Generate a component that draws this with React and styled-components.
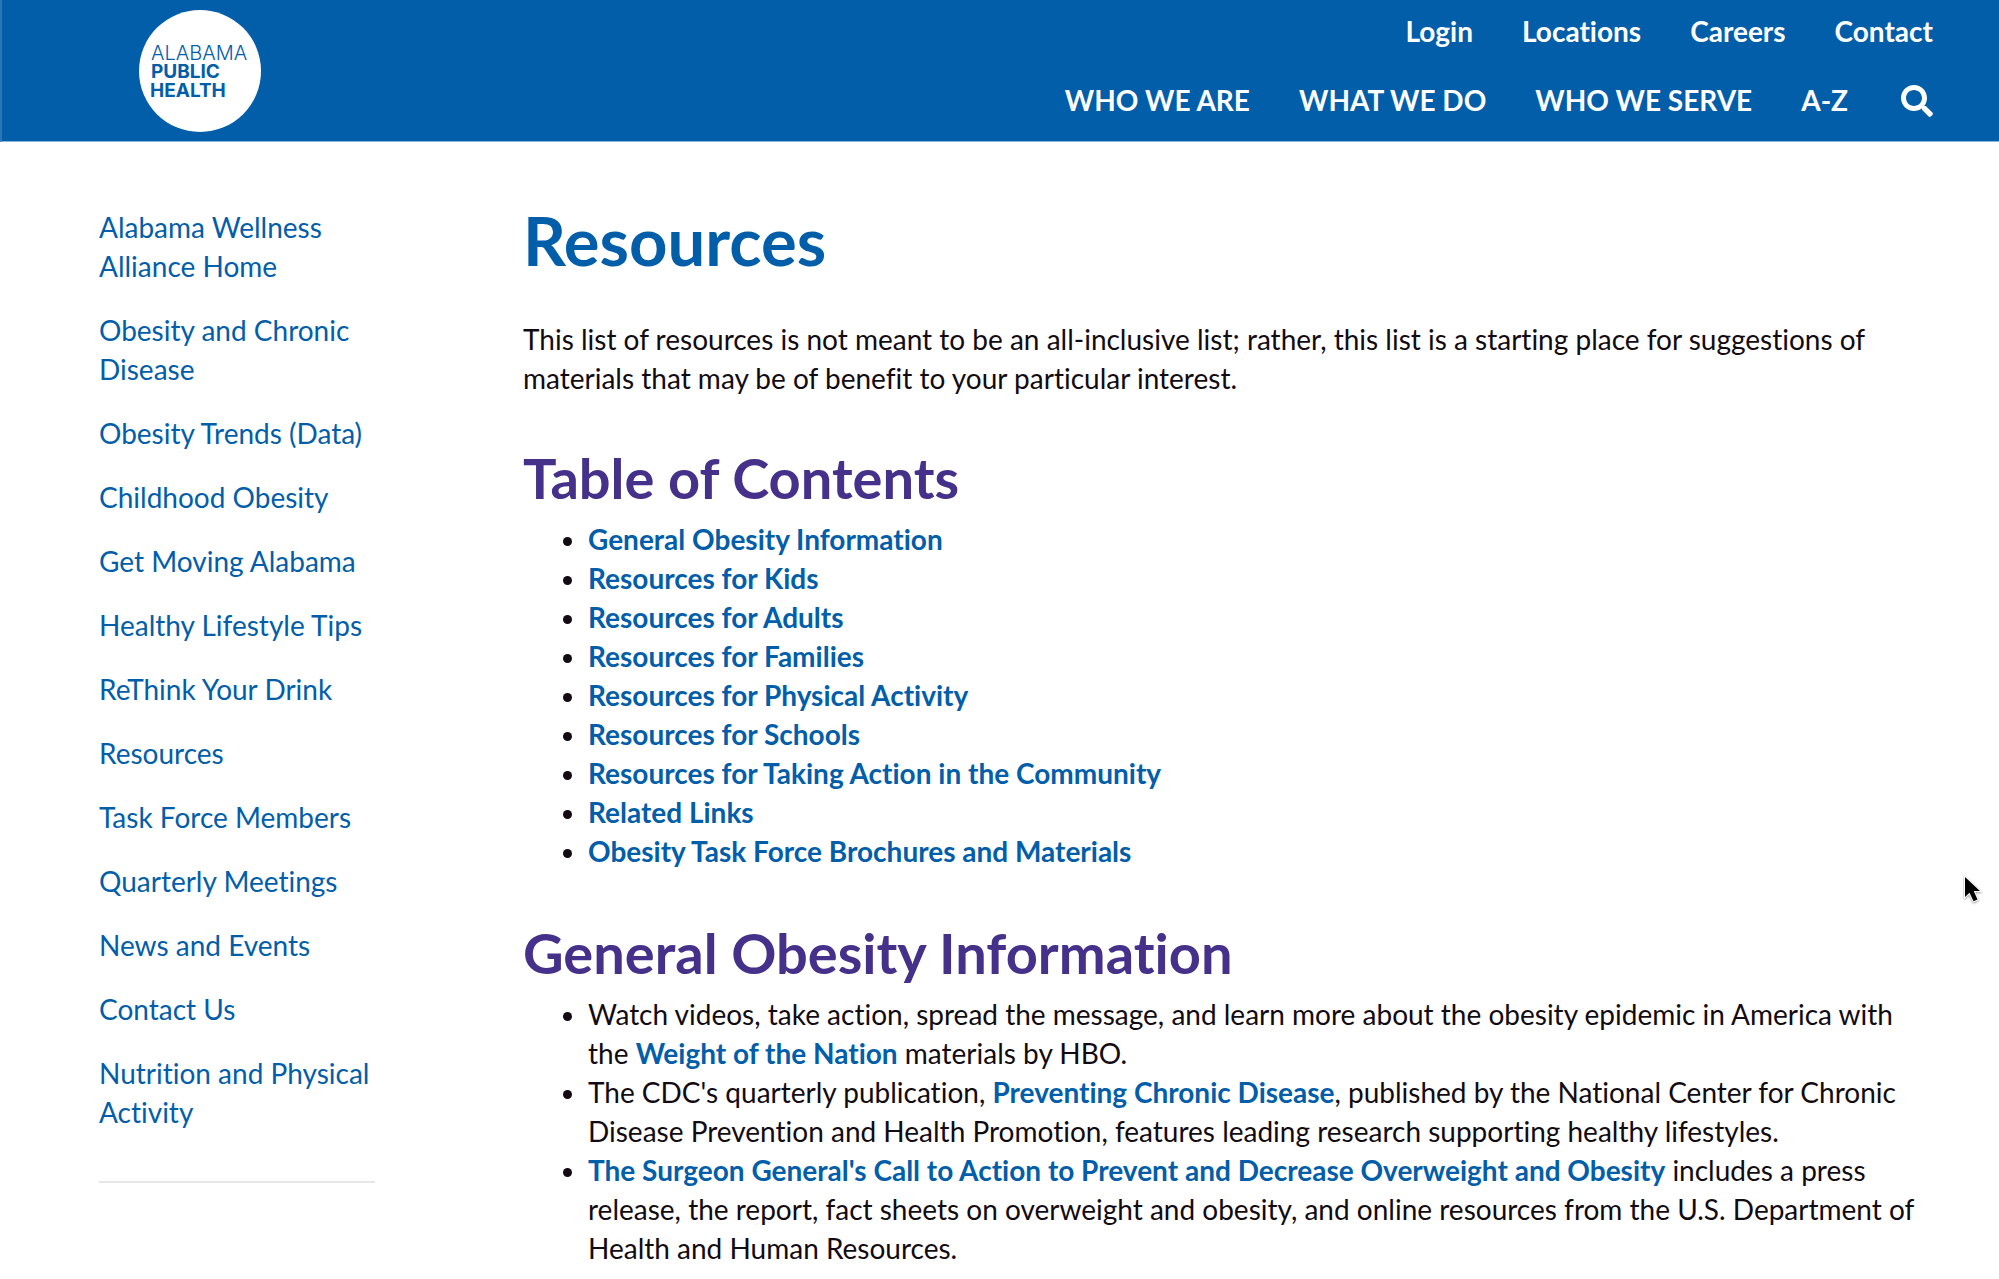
import React from 'react';
import styled, { createGlobalStyle } from 'styled-components';
import { FaSearch } from 'react-icons/fa';

const GlobalStyle = createGlobalStyle`
    * {
        box-sizing: border-box;
    }
    body {
        margin: 0;
        background-color: #fff;
        color: #120b12;
        font-family: Lato, 'Open Sans', sans-serif;
        font-size: 28px;
        line-height: 39px;
        font-variant-ligatures: none;
        overflow-x: hidden;
    }
    a {
        color: #025ea9;
        text-decoration: none;
        &:hover {
            text-decoration: underline;
        }
    }
`;

const Header = styled.header`
    display: flex;
    justify-content: space-between;
    align-items: flex-start;
    padding: 10px 66px 10px 137px;
    background-color: #025ea9;
    border-left: 2px solid #2a76b8;
    border-bottom: 1px solid #8bb5d8;
`;

const LogoLink = styled.a`
    display: block;
    height: 121px;
`;

const Menus = styled.div`
    display: flex;
    flex-direction: column;
    align-items: flex-end;
    gap: 30px;
    padding-top: 2px;
`;

const Menu = styled.nav`
    display: flex;
    align-items: center;
    gap: 49px;
`;

const MenuLink = styled.a`
    color: #fff;
    font-weight: 700;
`;

const SearchButton = styled.button`
    display: flex;
    margin: 0;
    padding: 0 0 0 4px;
    border: none;
    background: none;
    color: #fff;
    font-size: 32px;
    cursor: pointer;
`;

const Page = styled.div`
    display: flex;
    align-items: flex-start;
    gap: 148px;
    padding: 66px 75px 0 99px;
`;

const Sidebar = styled.nav`
    flex: 0 0 276px;
    display: flex;
    flex-direction: column;
    gap: 25px;
    padding-bottom: 49px;
    border-bottom: 2px solid #e6e6e6;
`;

const Content = styled.main`
    flex: 1;
    min-width: 0;
`;

const Title = styled.h1`
    margin: 0 0 48px;
    color: #025ea9;
    font-size: 67px;
    line-height: 64px;
`;

const Intro = styled.p`
    margin: 0;
`;

const SectionTitle = styled.h2`
    margin: 48px 0 10px;
    color: #45318a;
    font-size: 56px;
    line-height: 64px;
`;

const List = styled.ul`
    margin: 0;
    padding: 0 0 2px 65px;
`;

const ContentLink = styled.a`
    font-weight: 700;
`;

const Pointer = styled.svg`
    position: absolute;
    top: 873px;
    right: 14px;
`;

const topLinks = ['Login', 'Locations', 'Careers', 'Contact'];

const mainLinks = ['WHO WE ARE', 'WHAT WE DO', 'WHO WE SERVE', 'A-Z'];

const sideLinks = [
    'Alabama Wellness Alliance Home',
    'Obesity and Chronic Disease',
    'Obesity Trends (Data)',
    'Childhood Obesity',
    'Get Moving Alabama',
    'Healthy Lifestyle Tips',
    'ReThink Your Drink',
    'Resources',
    'Task Force Members',
    'Quarterly Meetings',
    'News and Events',
    'Contact Us',
    'Nutrition and Physical Activity',
];

const contents = [
    'General Obesity Information',
    'Resources for Kids',
    'Resources for Adults',
    'Resources for Families',
    'Resources for Physical Activity',
    'Resources for Schools',
    'Resources for Taking Action in the Community',
    'Related Links',
    'Obesity Task Force Brochures and Materials',
];

const Logo = () => (
    <svg width="122" height="122" viewBox="0 0 122 122" fill="#025ea9" fontFamily="Inter, sans-serif">
        <circle cx="61" cy="61" r="61" fill="#fff" />
        <text x="12" y="50" fontSize="20" fontWeight="300">ALABAMA</text>
        <text x="12" y="68" fontSize="19" fontWeight="700">PUBLIC</text>
        <text x="11" y="87" fontSize="19" fontWeight="700">HEALTH</text>
    </svg>
);

const App = () => (
    <>
        <GlobalStyle />
        <Header>
            <LogoLink href="#home">
                <Logo />
            </LogoLink>
            <Menus>
                <Menu>
                    {topLinks.map(label => (
                        <MenuLink key={label} href="#top">{label}</MenuLink>
                    ))}
                </Menu>
                <Menu>
                    {mainLinks.map(label => (
                        <MenuLink key={label} href="#menu">{label}</MenuLink>
                    ))}
                    <SearchButton type="button" aria-label="Search">
                        <FaSearch />
                    </SearchButton>
                </Menu>
            </Menus>
        </Header>
        <Page>
            <Sidebar>
                {sideLinks.map(label => (
                    <a key={label} href="#page">{label}</a>
                ))}
            </Sidebar>
            <Content>
                <Title>Resources</Title>
                <Intro>
                    This list of resources is not meant to be an all-inclusive list; rather, this list is a starting place for suggestions of materials that may be of benefit to your particular interest.
                </Intro>
                <SectionTitle>Table of Contents</SectionTitle>
                <List>
                    {contents.map(label => (
                        <li key={label}>
                            <ContentLink href="#section">{label}</ContentLink>
                        </li>
                    ))}
                </List>
                <SectionTitle>General Obesity Information</SectionTitle>
                <List>
                    <li>
                        Watch videos, take action, spread the message, and learn more about the obesity epidemic in America with the <ContentLink href="#nation">Weight of the Nation</ContentLink> materials by HBO.
                    </li>
                    <li>
                        The CDC's quarterly publication, <ContentLink href="#pcd">Preventing Chronic Disease</ContentLink>, published by the National Center for Chronic Disease Prevention and Health Promotion, features leading research supporting healthy lifestyles.
                    </li>
                    <li>
                        <ContentLink href="#surgeon">The Surgeon General's Call to Action to Prevent and Decrease Overweight and Obesity</ContentLink> includes a press release, the report, fact sheets on overweight and obesity, and online resources from the U.S. Department of Health and Human Resources.
                    </li>
                </List>
            </Content>
        </Page>
        <Pointer width="22" height="34" viewBox="0 0 22 34" aria-hidden="true">
            <path
                d="M2 4v20l4.500-4.200 4 8.500 4-1.800-3.800-8.500H17z"
                fill="#000"
                stroke="#fff"
                strokeWidth="2"
                paintOrder="stroke"
                filter="drop-shadow(0 1px 1px rgba(0, 0, 0, 0.4))"
            />
        </Pointer>
    </>
);

export default App;
